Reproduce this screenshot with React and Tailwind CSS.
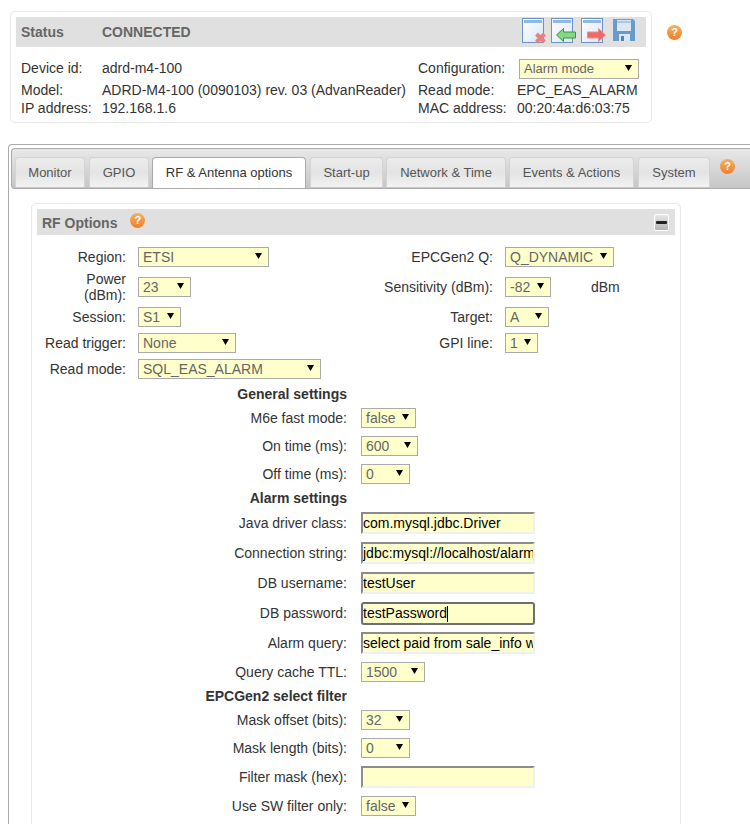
const FONT = { fontFamily: '"Liberation Sans", Arial, sans-serif' };

function Help({ className = "" }) {
  return (
    <span className={`inline-flex h-[15px] w-[15px] items-center justify-center rounded-full bg-gradient-to-b from-[#f5b060] to-[#ee7f24] text-[11px] font-bold leading-none text-white ${className}`}>?</span>
  );
}

function WindowBase({ children }) {
  return (
    <svg width="26" height="27" viewBox="0 0 26 27" className="block self-start">
      <defs>
        <linearGradient id="wbg" x1="0" y1="0" x2="1" y2="1">
          <stop offset="0" stopColor="#ffffff" />
          <stop offset="1" stopColor="#d9e6f4" />
        </linearGradient>
      </defs>
      <rect x="1.5" y="1.5" width="21" height="24" fill="url(#wbg)" stroke="#6d93c4" />
      <rect x="3" y="3" width="18" height="3" fill="#8db8e8" />
      {children}
    </svg>
  );
}

const IconX = () => (
  <WindowBase>
    <path d="M15.5 17 L23.5 25 M23.5 17 L15.5 25" stroke="#ea7f7f" strokeWidth="4" />
  </WindowBase>
);
const IconLeft = () => (
  <WindowBase>
    <path d="M6.5 18 L13.5 11.5 V15 H25.5 V21 H13.5 V24.5 Z" fill="#86d683" stroke="#3a9440" strokeWidth="1" />
  </WindowBase>
);
const IconRight = () => (
  <WindowBase>
    <path d="M25.5 18 L18.5 11.5 V15 H7.5 V21 H18.5 V24.5 Z" fill="#ee6a6a" stroke="#e89090" strokeWidth="1" />
  </WindowBase>
);
const IconSave = () => (
  <svg width="24" height="24" viewBox="0 0 24 24" className="ml-[6px] mt-[1px] block self-start">
    <path d="M1 1 H21 L23 3 V23 H1 Z" fill="#669bca" />
    <rect x="5" y="2" width="14" height="11" fill="#dbe8f3" />
    <rect x="5" y="3" width="14" height="2" fill="#a9c6e0" />
    <rect x="7" y="16" width="11" height="7" fill="#dbe8f3" />
    <rect x="9" y="18" width="3" height="5" fill="#4f84b4" />
  </svg>
);

function Sel({ w, value, small }) {
  return (
    <span style={{ width: w }} className="relative block h-[20px] shrink-0">
      <select
        defaultValue={value}
        className={`block h-[20px] w-full appearance-none border border-[#aaaaaa] bg-[#ffffcc] py-0 pl-[4px] leading-[18px] text-[#666666] outline-none ${small ? "text-[13px]" : "text-[14px]"}`}
      >
        <option>{value}</option>
      </select>
      <svg width="7" height="6" viewBox="0 0 7 6" className="pointer-events-none absolute right-[7px] top-[6px]">
        <path d="M0 0 H7 L3.5 6 Z" fill="#000000" />
      </svg>
    </span>
  );
}

function Tab({ w, active, children }) {
  return active ? (
    <div style={{ width: w }} className="z-10 flex h-[31px] items-center justify-center rounded-t-[4px] border border-b-0 border-[#aaaaaa] bg-white text-[13px] text-[#333333]">
      {children}
    </div>
  ) : (
    <div style={{ width: w }} className="flex h-[30px] items-center justify-center rounded-t-[4px] border border-b-0 border-[#d3d3d3] bg-gradient-to-b from-[#ececec] via-[#e4e4e4] to-[#f2f2f2] text-[13px] text-[#555555]">
      {children}
    </div>
  );
}

function TopRow({ h, a, b, c, d }) {
  return (
    <div style={{ height: h }} className="flex items-center text-[14px] text-[#333333]">
      <span className="w-[81px]">{a}</span>
      <span className="w-[316px] whitespace-nowrap">{b}</span>
      <span className="w-[99px]">{c}</span>
      <span className="whitespace-nowrap">{d}</span>
    </div>
  );
}

function Cell2({ h, label, lw, children }) {
  return (
    <div style={{ height: h }} className="flex items-center">
      <span style={{ width: lw }} className="shrink-0 pr-[12px] text-right leading-[16px] text-[#333333]">{label}</span>
      {children}
    </div>
  );
}

function DoubleRow({ h, l, r }) {
  return (
    <div style={{ height: h }} className="grid grid-cols-[340px_1fr]">
      <Cell2 h={h} label={l[0]} lw={101}>{l[1]}</Cell2>
      <Cell2 h={h} label={r[0]} lw={128}>{r[1]}</Cell2>
    </div>
  );
}

function FormRow({ h, label, children }) {
  return (
    <div style={{ height: h }} className="flex items-center">
      <span className="w-[310px] shrink-0 text-right text-[#333333]">{label}</span>
      <div className="ml-[14px] flex items-center">{children}</div>
    </div>
  );
}

function Heading({ h, children }) {
  return (
    <div style={{ height: h }} className="flex w-[310px] items-center justify-end font-bold text-[#333333]">
      {children}
    </div>
  );
}

function Inp({ value, focus }) {
  return (
    <div className="relative">
      <input
        readOnly
        value={value}
        className={`block w-[174px] bg-[#ffffcc] pl-0 text-[14px] text-black outline-none ${focus ? "h-[23px] rounded-[3px] border-2 border-[#6e6e6e]" : "h-[22px] border-2 border-t-[#8c8c8c] border-l-[#8c8c8c] border-r-[#f0f0f0] border-b-[#f0f0f0]"}`}
      />
      {focus && <span className="absolute left-[86px] top-[4px] h-[16px] w-px bg-black" />}
    </div>
  );
}

export default function App() {
  return (
    <div style={FONT} className="h-[824px] w-[750px] overflow-hidden bg-white pt-[11px] text-[14px]">
      <div className="flex">
        <div className="ml-[10px] h-[112px] w-[642px] rounded-[5px] border border-[#e8e8e8] p-[5px]">
          <div className="flex h-[30px] items-center bg-[#e0e0e0] pl-[5px] font-bold text-[#666666]">
            <span className="w-[81px]">Status</span>
            <span>CONNECTED</span>
            <div className="ml-auto mr-[10px] flex h-[30px]">
              <IconX />
              <div className="w-[3px]" />
              <IconLeft />
              <div className="w-[4px]" />
              <IconRight />
              <IconSave />
            </div>
          </div>
          <div className="mt-[11px] pl-[5px]">
            <TopRow h={21} a="Device id:" b="adrd-m4-100" c="Configuration:" d={<span className="ml-[2px] block"><Sel w={120} value="Alarm mode" small /></span>} />
            <TopRow h={22} a="Model:" b="ADRD-M4-100 (0090103) rev. 03 (AdvanReader)" c="Read mode:" d="EPC_EAS_ALARM" />
            <TopRow h={14} a="IP address:" b="192.168.1.6" c="MAC address:" d="00:20:4a:d6:03:75" />
          </div>
        </div>
        <Help className="ml-[15px] mt-[14px]" />
      </div>

      <div className="ml-[8px] mt-[21px] h-[700px] w-[800px] rounded-tl-[4px] border-l border-t border-[#aaaaaa] pl-[2px] pt-[3px]">
        <div className="flex h-[41px] rounded-l-[4px] border border-r-0 border-[#aaaaaa] bg-gradient-to-b from-[#e8e8e8] to-[#c6c6c6] pl-[3px] pt-[8px]">
          <Tab w={70}>Monitor</Tab>
          <div className="w-[4px]" />
          <Tab w={60}>GPIO</Tab>
          <div className="w-[3px]" />
          <Tab w={154} active>RF &amp; Antenna options</Tab>
          <div className="w-[4px]" />
          <Tab w={73}>Start-up</Tab>
          <div className="w-[3px]" />
          <Tab w={120}>Network &amp; Time</Tab>
          <div className="w-[3px]" />
          <Tab w={125}>Events &amp; Actions</Tab>
          <div className="w-[4px]" />
          <Tab w={72}>System</Tab>
          <Help className="ml-[10px] mt-[2px]" />
        </div>

        <div className="ml-[20px] mt-[14px] h-[640px] w-[650px] rounded-[5px] border border-[#e8e8e8] p-[5px]">
          <div className="flex h-[26px] items-center bg-[#e0e0e0] pl-[5px] font-bold text-[#666666]">
            <span className="pt-[2px]">RF Options</span>
            <Help className="ml-[13px] -mt-[3px]" />
            <div className="ml-auto mr-[6px] flex h-[17px] w-[15px] items-center justify-center rounded-[2px] border border-white bg-gradient-to-b from-[#e8e8e8] to-[#b4b4b4]">
              <span className="h-[3px] w-[11px] rounded-[1px] bg-[#222222]" />
            </div>
          </div>
          <div className="mt-[9px]">
            <DoubleRow h={26} l={["Region:", <Sel w={131} value="ETSI" />]} r={["EPCGen2 Q:", <Sel w={109} value="Q_DYNAMIC" />]} />
            <DoubleRow
              h={34}
              l={[<>Power<br />(dBm):</>, <Sel w={53} value="23" />]}
              r={["Sensitivity (dBm):", <div className="flex items-center"><Sel w={46} value="-82" /><span className="ml-[40px] text-[#333333]">dBm</span></div>]}
            />
            <DoubleRow h={26} l={["Session:", <Sel w={43} value="S1" />]} r={["Target:", <Sel w={44} value="A" />]} />
            <DoubleRow h={26} l={["Read trigger:", <Sel w={98} value="None" />]} r={["GPI line:", <Sel w={33} value="1" />]} />
            <div className="mb-[2px] flex h-[26px] items-center">
              <span className="w-[101px] shrink-0 whitespace-nowrap pr-[12px] text-right text-[#333333]">Read mode:</span>
              <Sel w={183} value="SQL_EAS_ALARM" />
            </div>
          </div>
          <Heading h={20}>General settings</Heading>
          <FormRow h={28} label="M6e fast mode:"><Sel w={55} value="false" /></FormRow>
          <FormRow h={28} label="On time (ms):"><Sel w={57} value="600" /></FormRow>
          <FormRow h={28} label="Off time (ms):"><Sel w={49} value="0" /></FormRow>
          <Heading h={20}>Alarm settings</Heading>
          <FormRow h={30} label="Java driver class:"><Inp value="com.mysql.jdbc.Driver" /></FormRow>
          <FormRow h={30} label="Connection string:"><Inp value="jdbc:mysql://localhost/alarm" /></FormRow>
          <FormRow h={30} label="DB username:"><Inp value="testUser" /></FormRow>
          <FormRow h={30} label="DB password:"><Inp value="testPassword" focus /></FormRow>
          <FormRow h={30} label="Alarm query:"><Inp value="select paid from sale_info where" /></FormRow>
          <FormRow h={28} label="Query cache TTL:"><Sel w={64} value="1500" /></FormRow>
          <Heading h={20}>EPCGen2 select filter</Heading>
          <FormRow h={28} label="Mask offset (bits):"><Sel w={49} value="32" /></FormRow>
          <FormRow h={28} label="Mask length (bits):"><Sel w={49} value="0" /></FormRow>
          <FormRow h={30} label="Filter mask (hex):"><Inp value="" /></FormRow>
          <FormRow h={28} label="Use SW filter only:"><Sel w={55} value="false" /></FormRow>
        </div>
      </div>
    </div>
  );
}
